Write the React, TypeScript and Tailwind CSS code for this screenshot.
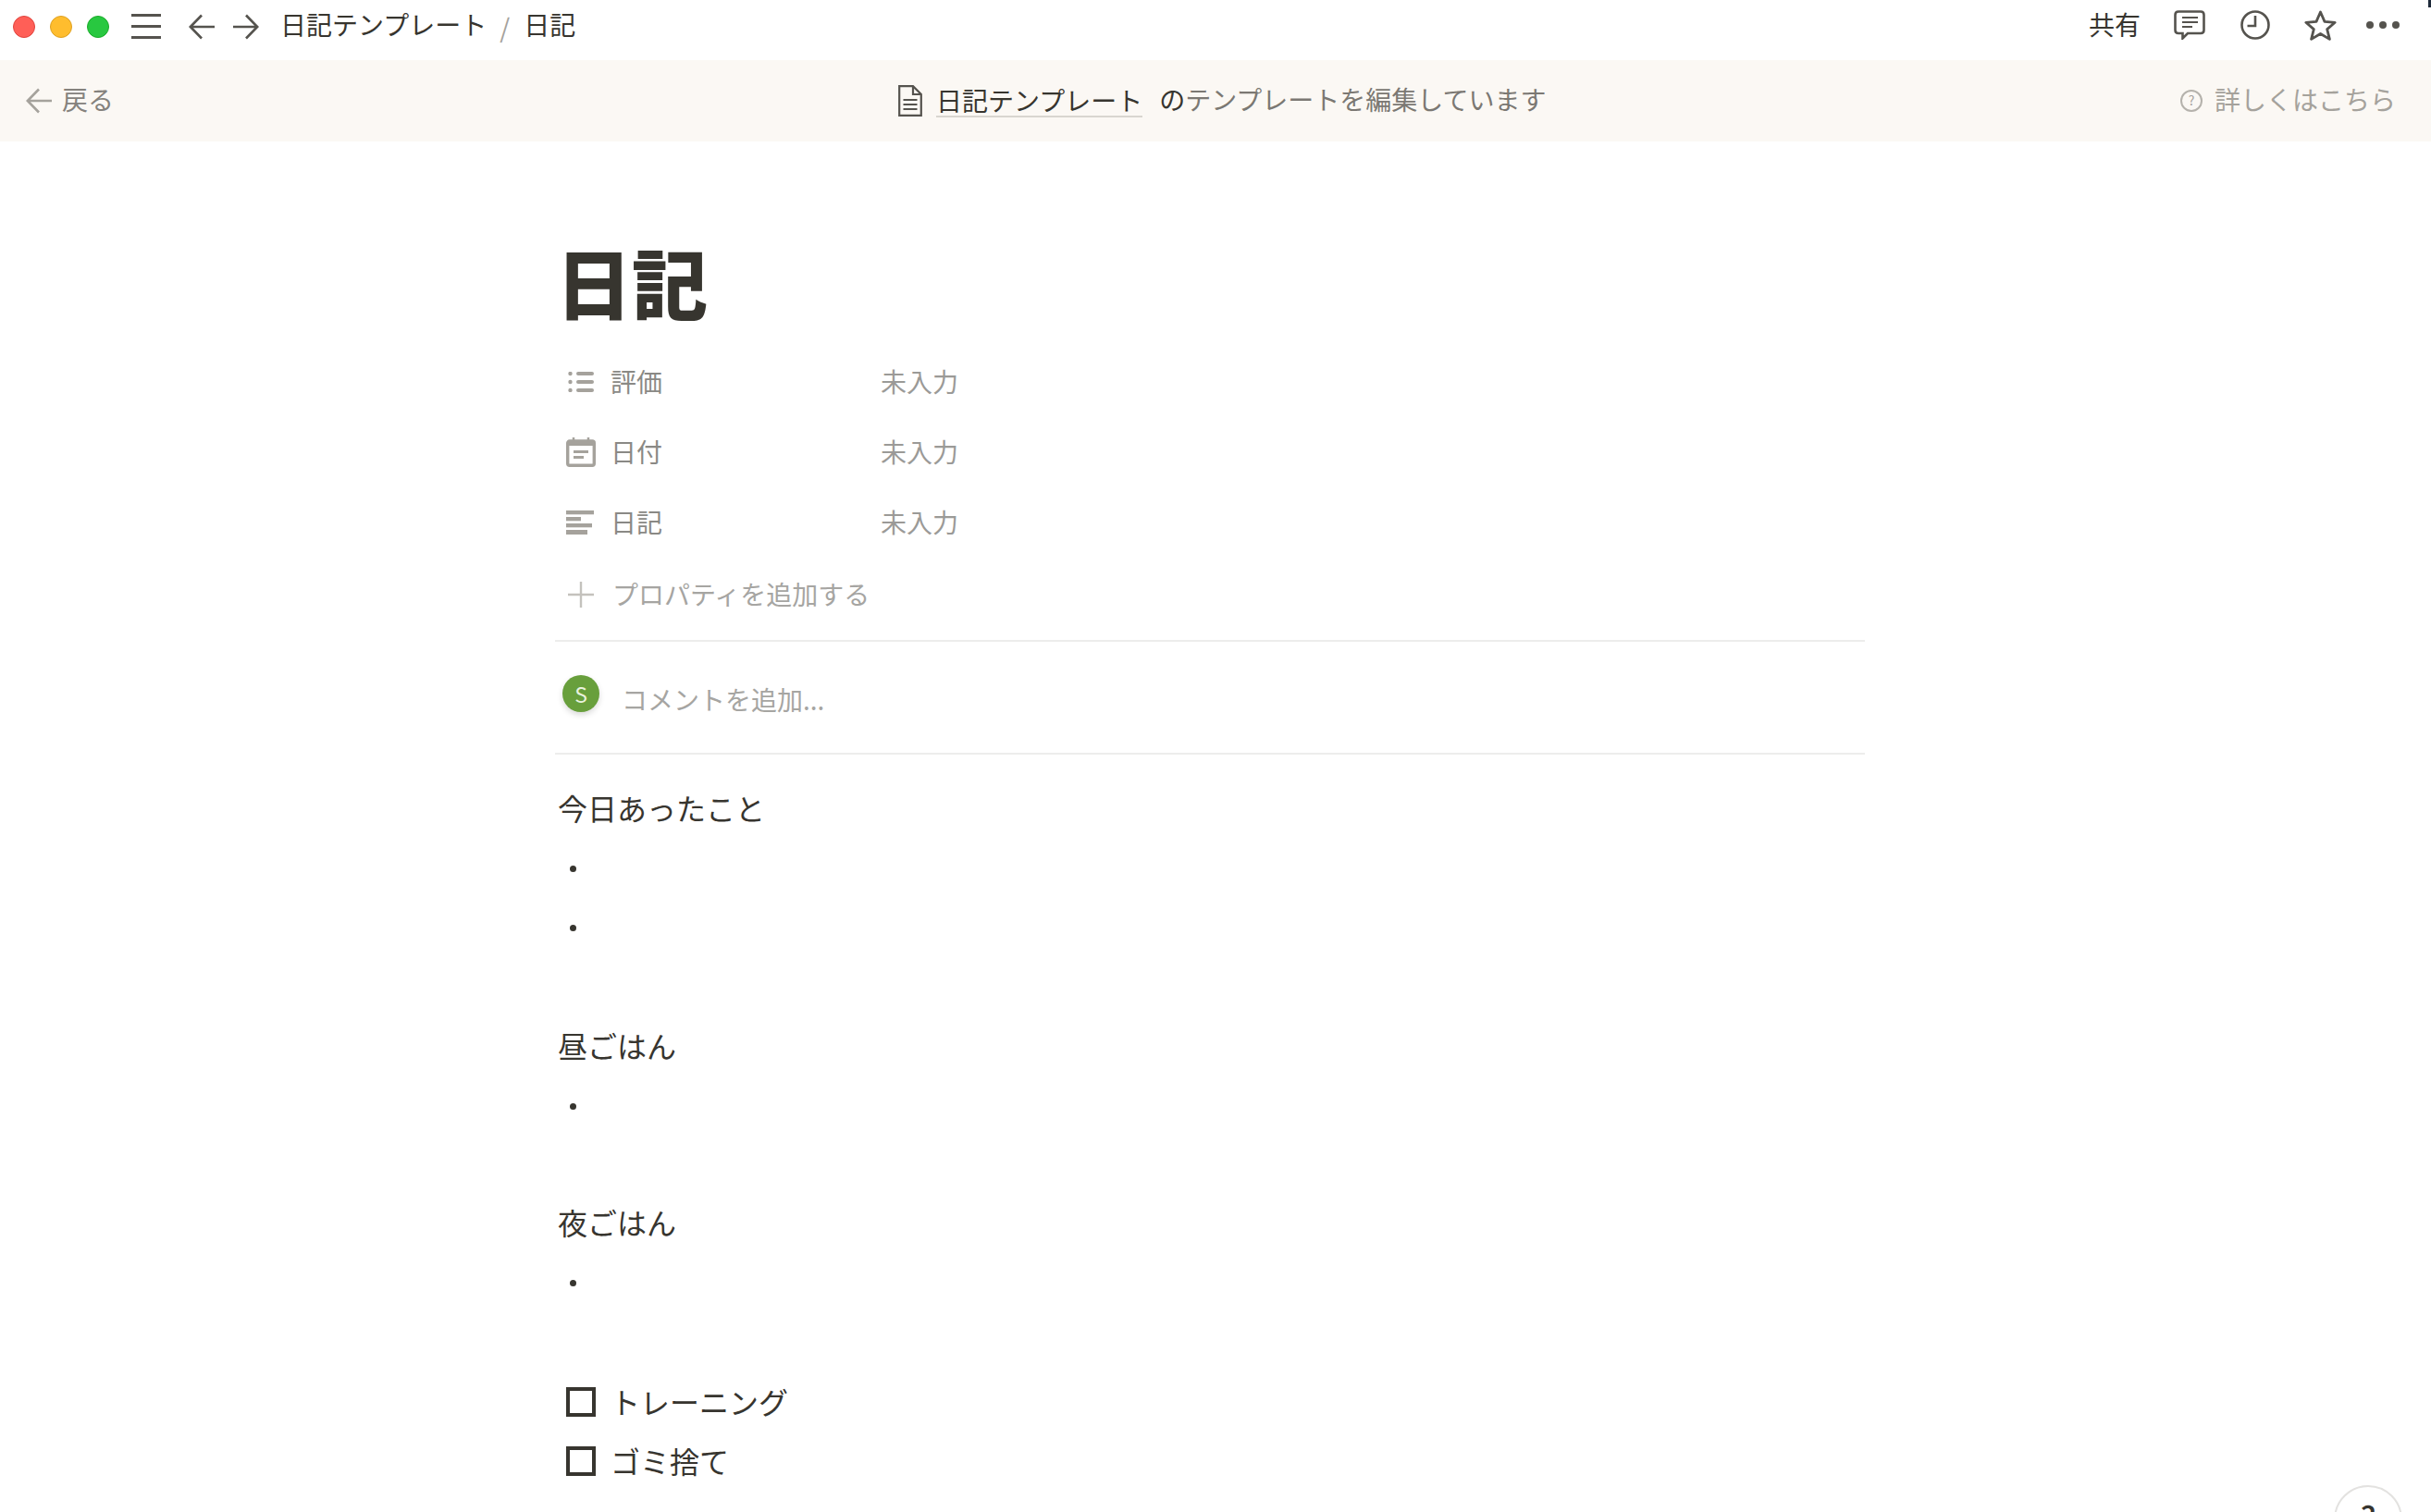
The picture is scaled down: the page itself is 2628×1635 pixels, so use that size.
import React from "react";

function Arrow({ dir, color, className }: { dir: "left" | "right"; color: string; className: string }) {
  return (
    <svg viewBox="0 0 28 28" className={className} fill="none" stroke={color} strokeWidth="2.6">
      {dir === "left" ? (
        <path d="M28 14H2M14 1.5L1.8 14L14 26.5" />
      ) : (
        <path d="M0 14H26M14 1.5L26.2 14L14 26.5" />
      )}
    </svg>
  );
}

function Bullet() {
  return (
    <div className="flex h-[64px] items-center pl-[16px] pt-[6px]">
      <div className="h-[7px] w-[7px] rounded-full bg-[#37352f]" />
    </div>
  );
}

function Heading({ children, mt }: { children: React.ReactNode; mt: string }) {
  return (
    <div className={`flex h-[60px] items-center pb-[2px] pl-[3px] text-[32px] text-[#37352f] ${mt}`}>{children}</div>
  );
}

function Todo({ children }: { children: React.ReactNode }) {
  return (
    <div className="flex h-[64px] items-center gap-[16px] pl-[12px] text-[32px] text-[#37352f]">
      <div className="h-[32px] w-[32px] border-[4px] border-[#37352f]" />
      <span className="pb-[2px]">{children}</span>
    </div>
  );
}

function PropRow({ icon, label }: { icon: React.ReactNode; label: string }) {
  return (
    <div className="flex h-[76px] items-center text-[28px]">
      <div className="flex w-[60px] items-center pl-[12px]">{icon}</div>
      <div className="w-[292px] pb-[2px] text-[#8a8985]">{label}</div>
      <div className="pb-[2px] text-[#9b9a97]">未入力</div>
    </div>
  );
}

export default function App() {
  return (
    <div
      className="relative h-[1635px] w-full overflow-hidden bg-white text-[#37352f]"
      style={{ fontFamily: '"Noto Sans CJK JP", "Noto Sans", sans-serif' }}
    >
      {/* window corner */}
      <div className="absolute right-0 top-0 h-[8px] w-[3px] bg-[#1e2a3a]" />

      {/* Title bar */}
      <header className="flex h-[65px] items-center justify-between pb-[8px] pl-[14px] pr-[34px]">
        <div className="flex items-center">
          <div className="flex gap-[16px]">
            <div className="h-[24px] w-[24px] rounded-full border border-[#e0443e] bg-[#ff5f57]" />
            <div className="h-[24px] w-[24px] rounded-full border border-[#dea123] bg-[#ffbd2e]" />
            <div className="h-[24px] w-[24px] rounded-full border border-[#1aab29] bg-[#28c840]" />
          </div>
          <svg viewBox="0 0 32 27" className="ml-[24px] h-[27px] w-[32px]" fill="none" stroke="#55534e" strokeWidth="3">
            <path d="M0 1.5H32M0 13.5H32M0 25.5H32" />
          </svg>
          <Arrow dir="left" color="#55534e" className="ml-[30px] h-[28px] w-[28px]" />
          <Arrow dir="right" color="#55534e" className="ml-[20px] h-[28px] w-[28px]" />
          <span className="ml-[23px] pb-[5px] text-[28px]">日記テンプレート</span>
          <span className="ml-[14px] text-[28px] text-[#a5a29c]">/</span>
          <span className="ml-[15px] pb-[5px] text-[28px]">日記</span>
        </div>
        <div className="flex items-center pb-[3px]">
          <span className="pb-[3px] text-[28px]">共有</span>
          <svg viewBox="0 0 34 32" className="ml-[36px] h-[32px] w-[34px]" fill="none" stroke="#55534e" strokeWidth="2.6">
            <path d="M5 1.5H29C31.2 1.5 32.5 2.8 32.5 5V21.5C32.5 23.7 31.2 25 29 25H15L9.5 30.5V25H5C2.8 25 1.5 23.7 1.5 21.5V5C1.5 2.8 2.8 1.5 5 1.5Z" />
            <path strokeWidth="1.8" d="M9 8H26M9 13H26M9 18H20" />
          </svg>
          <svg viewBox="0 0 32 32" className="ml-[38px] h-[32px] w-[32px]" fill="none" stroke="#55534e" strokeWidth="2.6">
            <circle cx="16" cy="16" r="14.5" />
            <path d="M16 6V17H7.5" />
          </svg>
          <svg viewBox="0 0 35 33" className="ml-[37px] h-[33px] w-[35px]" fill="none" stroke="#55534e" strokeWidth="2.8" strokeLinejoin="round">
            <path d="M17.5 2L22 12.4L33.2 13.3L24.7 20.6L27.4 31.4L17.5 25.5L7.6 31.4L10.3 20.6L1.8 13.3L13 12.4Z" />
          </svg>
          <svg viewBox="0 0 36 8" className="ml-[32px] h-[8px] w-[36px]" fill="#55534e">
            <circle cx="4" cy="4" r="4" />
            <circle cx="18" cy="4" r="4" />
            <circle cx="32" cy="4" r="4" />
          </svg>
        </div>
      </header>

      {/* Template banner */}
      <div className="relative flex h-[88px] items-center justify-between bg-[#fbf8f4] pl-[28px] pr-[38px] text-[28px]">
        <div className="flex items-center">
          <Arrow dir="left" color="#a5a29c" className="h-[28px] w-[28px]" />
          <span className="ml-[11px] pb-[5px] text-[#85827d]">戻る</span>
        </div>
        <div className="absolute left-[971px] flex items-center">
          <svg viewBox="0 0 26 34" className="h-[34px] w-[26px]" fill="none" stroke="#55534e" strokeWidth="2.2">
            <path d="M1.2 1.2H16L24.8 10V32.8H1.2Z" />
            <path d="M16 1.2V10H24.8" />
            <path strokeWidth="2" d="M5.5 16H20.5M5.5 21H20.5M5.5 26H20.5" />
          </svg>
          <span className="ml-[15px] border-b-2 border-[#d9d6d0] text-[28px] leading-[34px] text-[#37352f]">
            日記テンプレート
          </span>
          <span className="ml-[18px] pb-[5px] text-[#37352f]">の</span>
          <span className="pb-[5px] text-[#7b7873]">テンプレートを編集しています</span>
        </div>
        <div className="flex items-center text-[#a5a29c]">
          <svg viewBox="0 0 24 24" className="h-[24px] w-[24px]" fill="none" stroke="#b5b2ac" strokeWidth="2">
            <circle cx="12" cy="12" r="11" />
            <text x="12" y="17" textAnchor="middle" fontSize="14" fill="#a5a29c" stroke="none">?</text>
          </svg>
          <span className="ml-[13px] pb-[5px]">詳しくはこちら</span>
        </div>
      </div>

      {/* Page body */}
      <main className="ml-[600px] w-[1416px]">
        <h1 className="flex h-[222px] items-start pl-[1px] pt-[95px] text-[82px] font-black leading-[112px] text-[#37352f]">
          日記
        </h1>
        <PropRow
          label="評価"
          icon={
            <svg viewBox="0 0 28 22" className="ml-[2px] h-[22px] w-[28px]" fill="#a5a29c">
              <circle cx="2.5" cy="2" r="2.2" />
              <circle cx="2.5" cy="11" r="2.2" />
              <circle cx="2.5" cy="20" r="2.2" />
              <rect x="9" y="0" width="19" height="4" rx="2" />
              <rect x="9" y="9" width="19" height="4" rx="2" />
              <rect x="9" y="18" width="19" height="4" rx="2" />
            </svg>
          }
        />
        <PropRow
          label="日付"
          icon={
            <svg viewBox="0 0 32 32" className="h-[32px] w-[32px]" fill="none" stroke="#a5a29c" strokeWidth="3.4">
              <rect x="1.7" y="4" width="28.6" height="26.3" rx="2" />
              <path strokeWidth="6" d="M3 6H29" />
              <path strokeWidth="2.8" d="M8 15.5H24M8 21.5H19" />
              <path strokeWidth="2.5" d="M8 0V4M24 0V4" />
            </svg>
          }
        />
        <PropRow
          label="日記"
          icon={
            <svg viewBox="0 0 30 26" className="h-[26px] w-[30px]" fill="#a5a29c">
              <rect x="0" y="0" width="30" height="4.3" />
              <rect x="0" y="7" width="16" height="4.3" />
              <rect x="0" y="14" width="28" height="4.3" />
              <rect x="0" y="21" width="23" height="5" />
            </svg>
          }
        />
        <div className="flex h-[80px] items-center text-[28px] text-[#a6a5a2]">
          <svg viewBox="0 0 28 28" className="ml-[14px] h-[28px] w-[28px]" fill="none" stroke="#c4c2bd" strokeWidth="2.4">
            <path d="M0 14H28M14 0V28" />
          </svg>
          <span className="ml-[20px] pb-[2px]">プロパティを追加する</span>
        </div>
        <div className="mt-[9px] h-[2px] bg-[#ededec]" />
        <div className="relative flex h-[120px] items-center pl-[72px] pt-[3px] text-[28px] text-[#a6a5a2]">
          <div className="absolute left-[8px] top-[36px] flex h-[40px] w-[40px] items-center justify-center rounded-full bg-[#689f3c] text-[23px] text-[#e8f2de] shadow-[0_3px_6px_rgba(0,0,0,0.15)]">
            S
          </div>
          コメントを追加...
        </div>
        <div className="h-[2px] bg-[#ededec]" />

        <Heading mt="mt-[28px]">今日あったこと</Heading>
        <Bullet />
        <Bullet />
        <Heading mt="mt-[69px]">昼ごはん</Heading>
        <Bullet />
        <Heading mt="mt-[67px]">夜ごはん</Heading>
        <Bullet />
        <div className="mt-[68px]">
          <Todo>トレーニング</Todo>
          <Todo>ゴミ捨て</Todo>
        </div>
      </main>

      {/* Help button */}
      <div className="absolute left-[2523px] top-[1606px] flex h-[74px] w-[74px] items-start justify-center rounded-full border-2 border-[#e3e2e0] bg-white pt-[6px] text-[34px] font-medium text-[#37352f]">
        ?
      </div>
    </div>
  );
}
